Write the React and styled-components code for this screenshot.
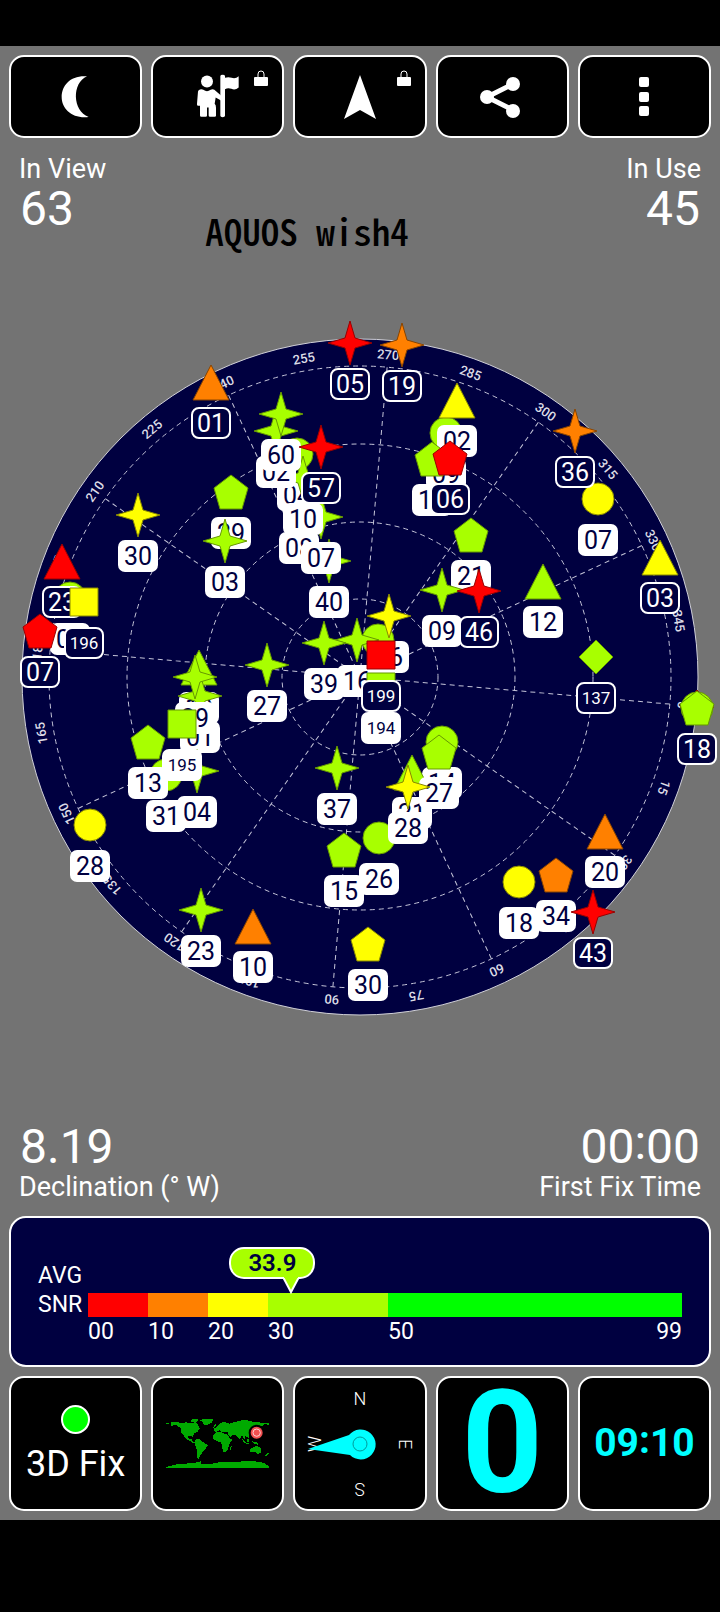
import React from "react";
import styled, { createGlobalStyle } from "styled-components";

const GlobalStyle = createGlobalStyle`
  *, *::before, *::after { box-sizing: border-box; }
  body { margin: 0; background: #000; font-family: Roboto, "Liberation Sans", sans-serif; color: #fff; }
`;

const colors = {
  red: "#ff0000",
  orange: "#ff8000",
  yellow: "#ffff00",
  lime: "#a8ff00",
  green: "#00ff00",
  navy: "#000040",
  cyan: "#00ffff",
};

const edges = { red: "#990000", orange: "#884400", yellow: "#888800", lime: "#669900" };

const Screen = styled.div`
  min-height: 100vh;
  padding: 46px 0 92px;
  background: #000;
`;

const Body = styled.main`
  display: flex;
  flex-direction: column;
  padding: 9px;
  background: #737373;
`;

const TileRow = styled.div`
  display: grid;
  grid-template-columns: repeat(5, 1fr);
  gap: 9px;
`;

const ToolButton = styled.button`
  position: relative;
  display: flex;
  align-items: center;
  justify-content: center;
  height: 83px;
  padding: 0;
  border: 2px solid #fff;
  border-radius: 15px;
  background: #000;
  color: #fff;
`;

const LockBadge = styled.svg`
  position: absolute;
  top: 13px;
  right: 13px;
`;

const Tile = styled.button`
  display: flex;
  flex-direction: column;
  align-items: center;
  justify-content: center;
  gap: 12px;
  height: 135px;
  padding: 0;
  border: 2px solid #fff;
  border-radius: 15px;
  background: #000;
  color: ${(p) => p.$color || "#fff"};
  font-family: inherit;
  font-weight: ${(p) => p.$weight || 400};
  font-size: ${(p) => p.$size || 36}px;
  line-height: 1;
`;

const Readouts = styled.section`
  display: flex;
  justify-content: space-between;
  margin: ${(p) => p.$margin};
  padding: 0 10px;
`;

const Readout = styled.div`
  display: flex;
  flex-direction: ${(p) => (p.$valueFirst ? "column" : "column-reverse")};
  justify-content: ${(p) => (p.$valueFirst ? "flex-start" : "flex-end")};
  text-align: ${(p) => p.$align || "left"};
`;

const Value = styled.div`
  padding: 0 1px;
  font-size: 48px;
  line-height: 50px;
`;

const Label = styled.div`
  font-size: 27px;
  line-height: 30px;
`;

const Colon = styled.span`
  vertical-align: 0.08em;
  line-height: 0;
`;

const Model = styled.h1`
  flex: 1;
  margin: 56px 0 0 99px;
  color: #000;
  font-family: "Noto Sans CJK JP", sans-serif;
  font-feature-settings: "hwid";
  font-weight: 500;
  font-size: 37px;
  line-height: 40px;
`;

const Sky = styled.svg`
  display: block;
  align-self: stretch;
  margin: 0 -9px;
  height: auto;
  overflow: visible;
`;

const SnrPanel = styled.section`
  display: flex;
  align-items: flex-start;
  margin-bottom: 9px;
  height: 151px;
  padding: 29px 27px 0 27px;
  border: 2px solid #fff;
  border-radius: 17px;
  background: ${colors.navy};
  font-size: 23px;
`;

const SnrName = styled.div`
  width: 50px;
  padding-top: 14px;
  line-height: 29px;
`;

const SnrScale = styled.div`
  position: relative;
  flex: 1;
  display: flex;
  padding-top: 46px;
`;

const Band = styled.div`
  flex: ${(p) => p.$span} 1 0;
  display: flex;
  justify-content: space-between;
  border-top: 24px solid ${(p) => p.$color};
  line-height: 30px;
`;

const Average = styled.output`
  position: absolute;
  top: 0;
  display: flex;
  justify-content: center;
  margin-left: -62px;
  width: 86px;
  height: 32px;
  border: 2px solid #fff;
  border-radius: 15px;
  background: ${colors.lime};
  color: ${colors.navy};
  font-weight: 600;
  font-size: 24px;
  line-height: 28px;
`;

const Pointer = styled.svg`
  position: absolute;
  top: 28px;
  left: 51px;
`;

const FixLamp = styled.span`
  width: 29px;
  height: 29px;
  border: 2px solid #fff;
  border-radius: 50%;
  background: ${colors.green};
`;

/* kind, colour, x, y, id, in use; later entries lie over earlier ones */
const satellites = [
  ["circle", "lime", 446, 433, "09", 1],
  ["circle", "lime", 299, 507, "08", 1],
  ["circle", "lime", 297, 454, "04", 1],
  ["circle", "lime", 378, 640, "", 0],
  ["circle", "lime", 442, 742, "14", 1],
  ["circle", "lime", 379, 838, "26", 1],
  ["circle", "lime", 70, 598, "01", 1],
  ["circle", "lime", 166, 775, "31", 1],
  ["circle", "yellow", 598, 499, "07", 1],
  ["circle", "yellow", 90, 825, "28", 1],
  ["circle", "yellow", 519, 882, "18", 1],
  ["triangle", "orange", 211, 382, "01", 0],
  ["triangle", "yellow", 457, 400, "02", 1],
  ["triangle", "yellow", 660, 557, "03", 0],
  ["triangle", "lime", 543, 581, "12", 1],
  ["triangle", "red", 62, 561, "23", 0],
  ["triangle", "lime", 199, 667, "19", 1],
  ["triangle", "lime", 412, 772, "21", 1],
  ["triangle", "orange", 605, 831, "20", 1],
  ["triangle", "orange", 253, 926, "10", 1],
  ["diamond", "red", 697, 707, "", 0],
  ["circle", "lime", 697, 708, "", 0],
  ["pentagon", "lime", 697, 708, "18", 0],
  ["pentagon", "lime", 231, 492, "29", 1],
  ["pentagon", "lime", 432, 459, "10", 1],
  ["pentagon", "red", 450, 458, "06", 0],
  ["pentagon", "lime", 471, 535, "21", 1],
  ["pentagon", "red", 40, 631, "07", 0],
  ["pentagon", "lime", 439, 752, "27", 1],
  ["pentagon", "lime", 148, 742, "13", 1],
  ["pentagon", "lime", 344, 850, "15", 1],
  ["pentagon", "yellow", 368, 944, "30", 1],
  ["pentagon", "orange", 556, 875, "34", 1],
  ["diamond", "lime", 596, 657, "137", 0],
  ["star", "lime", 329, 561, "40", 1],
  ["star", "lime", 321, 517, "07", 1],
  ["star", "lime", 303, 478, "10", 1],
  ["star", "lime", 276, 431, "02", 1],
  ["star", "lime", 281, 414, "60", 1],
  ["star", "red", 321, 447, "57", 0],
  ["star", "red", 350, 343, "05", 0],
  ["star", "orange", 402, 345, "19", 0],
  ["star", "orange", 575, 431, "36", 0],
  ["star", "lime", 225, 541, "03", 1],
  ["star", "yellow", 138, 515, "30", 1],
  ["star", "lime", 442, 590, "09", 1],
  ["star", "red", 479, 591, "46", 0],
  ["star", "lime", 357, 640, "16", 1],
  ["star", "lime", 324, 643, "39", 1],
  ["star", "yellow", 389, 616, "26", 1],
  ["star", "lime", 267, 665, "27", 1],
  ["star", "lime", 200, 696, "01", 1],
  ["star", "lime", 195, 677, "29", 1],
  ["star", "lime", 197, 771, "04", 1],
  ["star", "lime", 337, 768, "37", 1],
  ["star", "yellow", 408, 787, "28", 1],
  ["star", "lime", 201, 910, "23", 1],
  ["star", "red", 593, 912, "43", 0],
  ["square", "yellow", 84, 602, "196", 0],
  ["square", "lime", 182, 724, "195", 1],
  ["square", "lime", 381, 687, "194", 1],
  ["square", "red", 381, 655, "199", 0],
];

const outlines = {
  triangle: "0,-17 18,18 -18,18",
  diamond: "0,-17 17,0 0,17 -17,0",
  square: "-14,-14 14,-14 14,14 -14,14",
  pentagon: "0,-17 17,-4 11,17 -11,17 -17,-4",
  star: "0,-22 5,-5 22,0 5,5 0,22 -5,5 -22,0 -5,-5",
};

function Satellite({ sat: [kind, color, x, y, id, used] }) {
  const paint = { fill: colors[color], stroke: edges[color], strokeWidth: 1 };
  return (
    <g transform={`translate(${x} ${y})`}>
      {kind === "circle" ? <circle r="16" {...paint} /> : <polygon points={outlines[kind]} {...paint} />}
      {id && (
        <>
          <rect
            x={used ? -20 : -19}
            y={used ? 25 : 26}
            width={used ? 40 : 38}
            height={used ? 32 : 30}
            rx="7"
            fill={used ? "#fff" : colors.navy}
            stroke={used ? "none" : "#fff"}
            strokeWidth="2"
          />
          <text
            y={id.length > 2 ? 47 : 50}
            textAnchor="middle"
            fontSize={id.length > 2 ? 17 : 25}
            fill={used ? colors.navy : "#fff"}
          >
            {id}
          </text>
        </>
      )}
    </g>
  );
}

function SkyPlot() {
  const tilt = 95;
  const degrees = Array.from({ length: 24 }, (_, i) => i * 15);
  return (
    <Sky viewBox="0 320 720 720" role="img" aria-label="Satellite sky view">
      <circle cx="360" cy="677" r="338" fill={colors.navy} stroke="#d0d0d8" />
      <g fill="none" stroke="#c4c4d8" strokeDasharray="5 4">
        {[78, 155, 233, 311].map((r) => (
          <circle key={r} cx="360" cy="677" r={r} />
        ))}
        {degrees
          .filter((d) => d % 30 === 0)
          .map((d) => (
            <line key={d} x1="360" y1="677" x2="360" y2="366" transform={`rotate(${d + tilt} 360 677)`} />
          ))}
      </g>
      <g fill="#dcdce6" fontSize="13" fontWeight="500" textAnchor="middle">
        {degrees.map((d) => (
          <text key={d} x="360" y="358" transform={`rotate(${d + tilt} 360 677)`}>
            {d}
          </text>
        ))}
      </g>
      {satellites.map((s, i) => (
        <Satellite key={i} sat={s} />
      ))}
    </Sky>
  );
}

const Lock = () => (
  <LockBadge width="16" height="17" viewBox="0 0 16 17" aria-hidden="true">
    <path d="M5 8V4a3 3 0 0 1 6 0v4" fill="none" stroke="#fff" strokeWidth="1" />
    <rect x="1" y="7" width="14" height="9" rx="1" fill="#fff" />
  </LockBadge>
);

const MoonIcon = () => (
  <svg width="30" height="44" viewBox="0 0 90 132" aria-hidden="true">
    <path d="M78 4C30 0 2 30 2 66s32 66 81 60C34 108 32 24 78 4Z" fill="#fff" />
  </svg>
);

const GuideIcon = () => (
  <svg width="45" height="47" viewBox="0 0 135 140" fill="#fff" aria-hidden="true">
    <circle cx="36" cy="25" r="18" />
    <path d="M15 49q6-2 10 1 11 8 22 0 6-3 11 0l20 17v15l-16-9-3 19q4 3 4 12v24q0 3-4 3H45q-4 0-4-4v-24h-5v24q0 4-4 4H19q-4 0-4-4V98H9q-4 0-3-6l3-37q1-5 6-6Z" />
    <path d="M76 9q0-4 7-4t7 4v5q10-4 20 0 12 4 21-5v34q-10 9-22 4-10-4-19 1v80q0 4-7 4t-7-4Z" />
  </svg>
);

const NavIcon = () => (
  <svg width="34" height="46" viewBox="0 0 34 46" aria-hidden="true">
    <path d="M17 1 33 45 17 36 1 45Z" fill="#fff" />
  </svg>
);

const ShareIcon = () => (
  <svg width="45" height="42" viewBox="0 0 45 42" fill="#fff" aria-hidden="true">
    <path d="M33 8 7 21 33 34" fill="none" stroke="#fff" strokeWidth="5" />
    <circle cx="33" cy="8" r="7" />
    <circle cx="7" cy="21" r="7" />
    <circle cx="33" cy="35" r="7" />
  </svg>
);

const MenuIcon = () => (
  <svg width="10" height="40" viewBox="0 0 10 40" fill="#fff" aria-hidden="true">
    <rect width="10" height="10" rx="2" />
    <rect y="15" width="10" height="10" rx="2" />
    <rect y="29" width="10" height="10" rx="2" />
  </svg>
);

const WorldMap = () => (
  <svg width="103" height="49" viewBox="0 0 309 147" aria-hidden="true">
    <g fill="#00aa00" shapeRendering="crispEdges">
      <path d="M0 11h9v4H0ZM15 10l13-2 17 4 15-2 15 2 13-2 8 8 6 10-7 10-9 4-6 8 2 8-8-8-8 2 2 6 8 2 4 8 8 2-4 4-12-8-12-6-8-12-8-8V28l-10-8-10-2-10 6Z" />
      <path d="M72 2l26-2-4 8H76ZM100 4l12-4h31l-5 10-14 8h-8l-8-10Z" />
      <path d="M88 62l12-2 12 10 14 8-6 10-8 8-8 12-6 12-5-4 1-16-2-10-6-14Z" />
      <path d="M142 48l8-8 14-2 12 6 10 4 6 12 6 2-8 14-4 14-8 10-6-2-4-14-2-14-14-4-10-6ZM192 84l5-4-2 11-4 2Z" />
      <path d="M144 36v-8l8-4 6-8 10-6h12l10 4 20-6 26-6 14 4 22 4 37 2v5l-13-1-8 6-12-2-6 10-8 8-12 8-2 10-10-4-2 10-8-12-8 10-8-10-12-2-6 6-6-6-4-10-14 2-10-6-10 6ZM144 18l6-2-2 8-6 2Z" />
      <path d="M228 60l12 10 10 4-4 2-12-6ZM242 60l8-2v10l-6 2ZM256 66l16 4 6 8-14-4ZM252 92l10-8 12-4 12 10-2 12-10 4-8-8-12 2ZM298 110l9-9 2 2-9 9Z" />
      <path d="M0 144l25-6 10-4h25l35-4 12-5-3 9 26 2 30-6h40l40-4 40 2 18 6 10 8v5H0Z" />
    </g>
    <circle cx="272" cy="41" r="24" fill="#000" />
    <circle cx="272" cy="41" r="18" fill="#f05050" />
    <circle cx="272" cy="41" r="11" fill="none" stroke="#ffd0d0" strokeWidth="3" />
  </svg>
);

const Compass = () => (
  <svg width="120" height="120" viewBox="-60 -60 120 120" aria-label="Compass">
    <g fill="#fff" fontSize="18" fontWeight="300" textAnchor="middle">
      {["N", "E", "S", "W"].map((c, i) => (
        <text key={c} y="-39" transform={`rotate(${i * 90})`}>
          {c}
        </text>
      ))}
    </g>
    <path d="M-52 5-11-9A15 15 0 1 1-10 11Z" fill={colors.cyan} />
    <circle r="7" fill="none" stroke="#009a9a" />
  </svg>
);

export default function App() {
  return (
    <Screen>
      <GlobalStyle />
      <Body>
        <TileRow as="nav">
          <ToolButton aria-label="Night mode"><MoonIcon /></ToolButton>
          <ToolButton aria-label="Guide"><GuideIcon /><Lock /></ToolButton>
          <ToolButton aria-label="Navigate"><NavIcon /><Lock /></ToolButton>
          <ToolButton aria-label="Share"><ShareIcon /></ToolButton>
          <ToolButton aria-label="More options"><MenuIcon /></ToolButton>
        </TileRow>

        <Readouts $margin="16px 0 70px">
          <Readout>
            <Value>63</Value>
            <Label>In View</Label>
          </Readout>
          <Model>AQUOS wish4</Model>
          <Readout $align="right">
            <Value>45</Value>
            <Label>In Use</Label>
          </Readout>
        </Readouts>

        <SkyPlot />

        <Readouts $margin="82px 0 14px">
          <Readout $valueFirst>
            <Value>8.19</Value>
            <Label>Declination (° W)</Label>
          </Readout>
          <Readout $valueFirst $align="right">
            <Value>00<Colon>:</Colon>00</Value>
            <Label>First Fix Time</Label>
          </Readout>
        </Readouts>

        <SnrPanel>
          <SnrName>AVG<br />SNR</SnrName>
          <SnrScale>
            <Band $span={10} $color={colors.red}>00</Band>
            <Band $span={10} $color={colors.orange}>10</Band>
            <Band $span={10} $color={colors.yellow}>20</Band>
            <Band $span={20} $color={colors.lime}>30</Band>
            <Band $span={49} $color={colors.green}><span>50</span><span>99</span></Band>
            <Average style={{ left: `${(33.9 / 99) * 100}%` }}>
              33.9
              <Pointer width="18" height="18" viewBox="0 0 18 18" aria-hidden="true">
                <path d="M1 0 9 15 17 0" fill={colors.lime} stroke="#fff" strokeWidth="2" />
                <path d="M2 0h14v1H2Z" fill={colors.lime} />
              </Pointer>
            </Average>
          </SnrScale>
        </SnrPanel>

        <TileRow>
          <Tile><FixLamp />3D Fix</Tile>
          <Tile aria-label="World map"><WorldMap /></Tile>
          <Tile aria-label="Compass"><Compass /></Tile>
          <Tile $color={colors.cyan} $weight={700} $size={142}>0</Tile>
          <Tile $color={colors.cyan} $weight={700} $size={39}>
            <span>09<Colon>:</Colon>10</span>
          </Tile>
        </TileRow>
      </Body>
    </Screen>
  );
}
